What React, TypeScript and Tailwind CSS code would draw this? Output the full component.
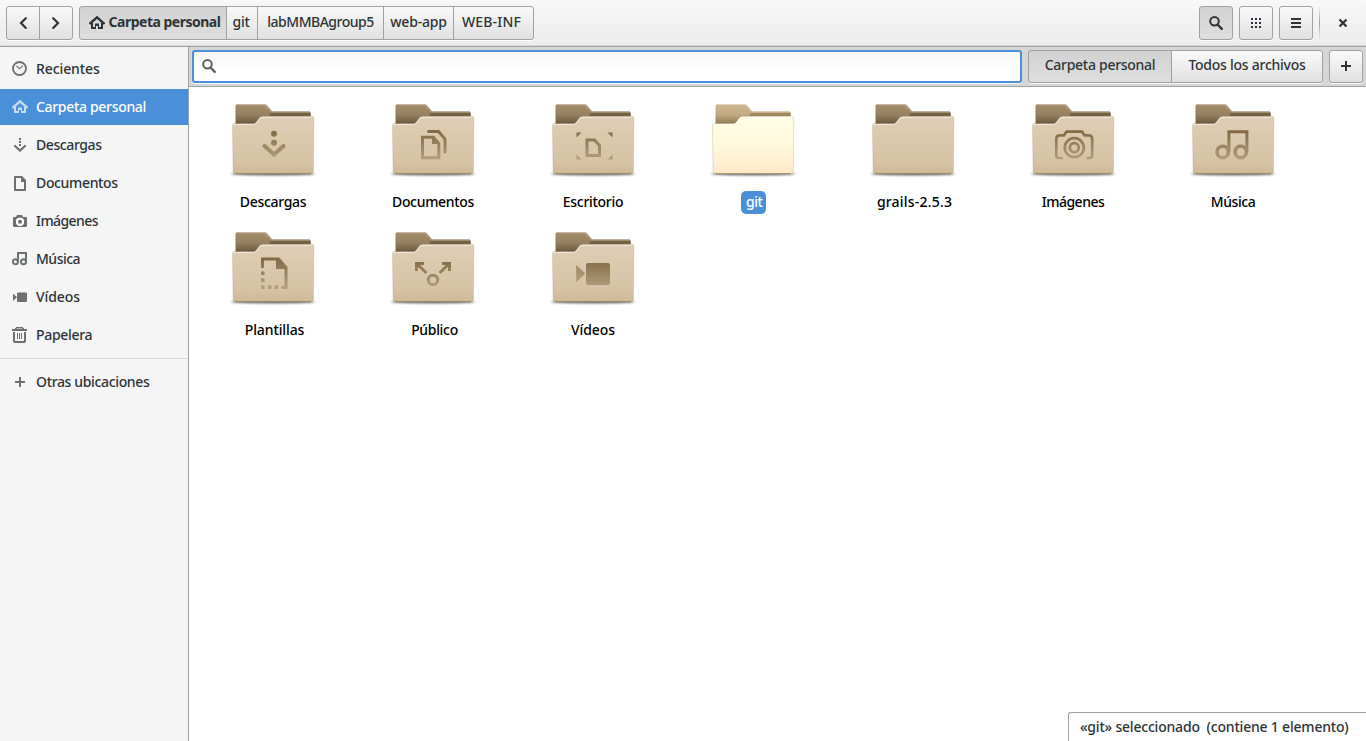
import type { ReactNode } from "react";

function Icon({ children, size = 16 }: { children: ReactNode; size?: number }) {
  return (
    <svg width={size} height={size} viewBox="0 0 16 16" fill="currentColor" className="block shrink-0">
      {children}
    </svg>
  );
}

const HomeIcon = () => (
  <Icon>
    <path d="M1.200 8.300 8 2.300l6.800 6" fill="none" stroke="currentColor" strokeWidth="2.400" strokeLinecap="round" strokeLinejoin="miter" />
    <path d="M2 8h2v4h2V8.500h4V12h2V8h2v5.300q0 .7-.7.700H9v-3H7v3H2.700Q2 14 2 13.300z" />
  </Icon>
);
const SearchIcon = () => (
  <Icon>
    <circle cx="6.500" cy="6.300" r="4.300" fill="none" stroke="currentColor" strokeWidth="2" />
    <path d="m9.500 9.500 4.300 4.300" stroke="currentColor" strokeWidth="2.400" strokeLinecap="round" />
  </Icon>
);
const PlusIcon = () => (
  <Icon>
    <path d="M3 7h4V3h2v4h4v2H9v4H7V9H3z" />
  </Icon>
);
const ClockIcon = () => (
  <Icon>
    <circle cx="7.500" cy="7.500" r="6.500" fill="none" stroke="currentColor" strokeWidth="1.900" />
    <path d="m4.500 5 3 2.700L11 4.700" fill="none" stroke="currentColor" strokeWidth="1.100" />
  </Icon>
);
const DownloadIcon = () => (
  <Icon>
    <path d="M7 1h2v2H7zM7 4h2v2H7zM7 7h2v2H7z" />
    <path d="m3 9 5 4.500L13 9" fill="none" stroke="currentColor" strokeWidth="2.300" strokeLinecap="round" />
  </Icon>
);
const DocIcon = () => (
  <Icon>
    <path fillRule="evenodd" d="M3 1h7l4 4v10a1 1 0 0 1-1 1H3a1 1 0 0 1-1-1V2a1 1 0 0 1 1-1zm1 2v11h8V7H9V3z" />
  </Icon>
);
const CameraIcon = () => (
  <Icon>
    <path fillRule="evenodd" d="M5 2h5l1 2h3a1 1 0 0 1 1 1v8a1 1 0 0 1-1 1H2a1 1 0 0 1-1-1V5a1 1 0 0 1 1-1h2zM8 4.800a4 4 0 1 0 0 8 4 4 0 0 0 0-8z" />
    <circle cx="8" cy="8.800" r="2" />
    <circle cx="8" cy="8.800" r="3.300" fill="none" stroke="#fff" strokeWidth="1.600" />
  </Icon>
);
const MusicIcon = () => (
  <Icon>
    <circle cx="3.400" cy="10.700" r="2.500" fill="none" stroke="currentColor" strokeWidth="2" />
    <circle cx="11.500" cy="10.700" r="2.500" fill="none" stroke="currentColor" strokeWidth="2" />
    <path d="M5 1h10v10h-2V3H7v8H5z" />
  </Icon>
);
const VideoIcon = () => (
  <Icon>
    <rect x="5" y="3.500" width="10" height="9.500" rx="1" />
    <path d="M1 4.500v7.500l4-3.800z" />
  </Icon>
);
const TrashIcon = () => (
  <Icon>
    <path d="M0 2h15v2H0zM4 0h7v1h1v1h-1.500V1.500h-6V2H3V1h1z" />
    <path d="M2 5v9.200q0 .8.800.8h9.400q.8 0 .8-.8V5" fill="none" stroke="currentColor" strokeWidth="2" />
    <path d="M5 6h1v6H5zM7 6h1v6H7zM9 6h1v6H9z" />
  </Icon>
);

const places = [
  { name: "Recientes", icon: <ClockIcon />, tracking: "tracking-[-0.1px]" },
  { name: "Carpeta personal", icon: <HomeIcon />, active: true, tracking: "tracking-[-0.32px]" },
  { name: "Descargas", icon: <DownloadIcon />, tracking: "tracking-[-0.4px]" },
  { name: "Documentos", icon: <DocIcon />, tracking: "tracking-[-0.35px]" },
  { name: "Imágenes", icon: <CameraIcon />, tracking: "tracking-[-0.58px]" },
  { name: "Música", icon: <MusicIcon />, tracking: "tracking-[-0.5px]" },
  { name: "Vídeos", icon: <VideoIcon />, tracking: "tracking-[-0.1px]" },
  { name: "Papelera", icon: <TrashIcon />, tracking: "tracking-[-0.32px]" },
];

const line = { fill: "none", stroke: "url(#ink)", strokeWidth: 3 };

const emblems: Record<string, ReactNode> = {
  Descargas: (
    <>
      <circle cx="49" cy="35.700" r="3" fill="url(#ink)" />
      <circle cx="49" cy="44.700" r="3" fill="url(#ink)" />
      <path d="M39.500 48 49 56.500 58.500 48" {...line} strokeWidth={4} strokeLinecap="round" />
    </>
  ),
  Documentos: (
    <>
      <path d="M37.500 39.200h10.800l5.500 6.300v14.300H37.500z" {...line} />
      <path d="M47 38.500V46h7.500z" fill="url(#ink)" />
      <path d="M43.500 33.500h10l6.500 7.500v13" {...line} strokeLinecap="round" />
    </>
  ),
  Escritorio: (
    <>
      <path d="M31.500 34.500h5l-5 5zM62.500 34.500h5v5zM31.500 56.500v5h5zM67.500 56.500v5h-5z" fill="url(#ink)" />
      <path d="M42 42h7.500l5 5.500v10H42z" {...line} />
    </>
  ),
  Imágenes: (
    <>
      <path d="M38 60H34q-2.700 0-2.700-3V41q0-3.700 3.700-3.700h4l2.500-3.600h15.500l2.500 3.600h4q3.700 0 3.700 3.700v16q0 3-2.700 3h-3" {...line} strokeWidth={2.7} />
      <circle cx="49.300" cy="49.700" r="9.500" {...line} strokeWidth={2.7} />
      <circle cx="49.300" cy="49.700" r="4.500" {...line} strokeWidth={2.8} />
    </>
  ),
  Música: (
    <>
      <circle cx="37.700" cy="54" r="5.700" {...line} strokeWidth={3.6} />
      <circle cx="55.700" cy="54" r="5.700" {...line} strokeWidth={3.6} />
      <path d="M43.900 54V33.700h18V54" {...line} />
    </>
  ),
  Plantillas: (
    <>
      <path d="M37.500 42v-9h16l7.500 8.500v20h-4.500" {...line} />
      <path d="M51 32v11h11z" fill="url(#ink)" />
      <path d="M36 45.500h3.500V49H36zM36 52.500h3.500V56H36zM36 59.500h3.500V63H36zM43 59.500h3.500V63H43zM49.500 59.500H53V63h-3.500z" fill="url(#ink)" />
    </>
  ),
  Público: (
    <>
      <circle cx="48" cy="54" r="4.700" {...line} />
      <path d="M31.500 45v-7.500H39M32 38l9.500 9M57 37.500h7.500V45M64 38l-9.500 9" {...line} />
    </>
  ),
  Vídeos: (
    <>
      <rect x="41" y="37" width="24" height="22" rx="2" fill="url(#ink)" />
      <path d="M31.200 39v17.300l9.100-8.700z" fill="url(#ink)" opacity=".8" />
    </>
  ),
};

function FolderDefs() {
  return (
    <svg width="0" height="0" className="absolute">
      <defs>
        <linearGradient id="ink" gradientUnits="userSpaceOnUse" x1="0" y1="33" x2="0" y2="63">
          <stop offset="0" stopColor="#826a44" />
          <stop offset="1" stopColor="#b5a080" />
        </linearGradient>
        <linearGradient id="front" x1="0" y1="0" x2="0" y2="1">
          <stop offset="0" stopColor="#dfceb6" />
          <stop offset=".8" stopColor="#d6c3a5" />
          <stop offset="1" stopColor="#cdb897" />
        </linearGradient>
        <linearGradient id="frontLit" x1="0" y1="0" x2="0" y2="1">
          <stop offset="0" stopColor="#fffee6" />
          <stop offset=".5" stopColor="#fff8dc" />
          <stop offset="1" stopColor="#ffe8c8" />
        </linearGradient>
        <linearGradient id="back" x1="0" y1="0" x2="0" y2="1">
          <stop offset="0" stopColor="#a28c6a" />
          <stop offset=".5" stopColor="#958060" />
          <stop offset="1" stopColor="#655438" />
        </linearGradient>
        <linearGradient id="backLit" x1="0" y1="0" x2="0" y2="1">
          <stop offset="0" stopColor="#cdb58c" />
          <stop offset=".5" stopColor="#c2a981" />
          <stop offset="1" stopColor="#897351" />
        </linearGradient>
        <filter id="soft" x="-10%" y="-100%" width="120%" height="300%">
          <feGaussianBlur stdDeviation="1.500 .8" />
        </filter>
      </defs>
    </svg>
  );
}

function Folder({ name, lit }: { name: string; lit?: boolean }) {
  return (
    <svg width="96" height="84" viewBox="0 0 96 84" className="block">
      <ellipse cx="48" cy="75.800" rx="42.500" ry="1.700" fill="#000" opacity=".6" filter="url(#soft)" />
      <path
        d="M10.500 27V8q0-1.700 1.700-1.700h27.500q1.300 0 2 .8l4.600 5.400q.7.800 1.800.8H84q1.700 0 1.700 1.700V27z"
        fill={lit ? "url(#backLit)" : "url(#back)"}
      />
      <path d="M46 15h39.700v3H44z" fill={lit ? "#8d7550" : "#5f4e33"} opacity=".65" />
      <path d="M12 6.800h28l5.300 6.400q.7.600 1.600.6H84" fill="none" stroke="#fff" strokeOpacity=".25" />
      <path
        d="M7.500 27.500q0-2 2-2h18.700q2 0 3-1.500l3-4q1.300-1.800 3.300-1.800h49.300q2 0 2 2L88.400 72.500q-.2 3.500-3 3.500H11Q8.200 76 8.100 72.500z"
        fill={lit ? "url(#frontLit)" : "url(#front)"}
        stroke="#8f7a58"
        strokeOpacity=".4"
        strokeWidth=".6"
      />
      <path d="M8.500 26.500h20q2 0 3.200-1.700l3-4q1-1.500 2.800-1.500h49.800" fill="none" stroke="#fff" strokeOpacity=".5" />
      <path d="M10 75.500h76" stroke="#8d7856" strokeOpacity=".7" />
      {emblems[name]}
    </svg>
  );
}

const folders = [
  { name: "Descargas", style: "tracking-[-0.32px]" },
  { name: "Documentos", style: "tracking-[-0.32px]" },
  { name: "Escritorio", style: "tracking-[-0.3px]" },
  { name: "git", style: "ml-px w-[25px] bg-[#4a90d9] text-white tracking-[-0.5px]" },
  { name: "grails-2.5.3", style: "ml-[3px] tracking-[0.2px]" },
  { name: "Imágenes", style: "tracking-[-0.52px]" },
  { name: "Música", style: "tracking-[-0.45px]" },
  { name: "Plantillas", style: "ml-[3px] tracking-[-0.1px]" },
  { name: "Público", style: "ml-[3px] tracking-[-0.32px]" },
  { name: "Vídeos", style: "tracking-[-0.1px]" },
];

const raised = "border border-[#a1a1a1] bg-linear-to-b from-[#fafafa] to-[#e0e0e0] shadow-[0_1px_0_#ffffffcc]";
const pressed = "border border-[#a1a1a1] bg-linear-to-b from-[#d2d2d2] to-[#dedede] shadow-[0_1px_0_#ffffffcc]";
const center = "flex items-center justify-center whitespace-nowrap";

export default function App() {
  return (
    <div className="relative flex h-[741px] w-[1366px] flex-col overflow-hidden bg-white font-['Noto_Sans','Open_Sans',sans-serif] text-[14px] leading-5 font-medium text-[#2e3436]">
      <FolderDefs />
      <header className="flex h-[47px] shrink-0 items-start border-b border-[#a1a1a1] bg-linear-to-b from-[#f8f8f8] to-[#ececec] px-1.5 pt-1.5 shadow-[inset_0_-1px_0_#d9d9d9]">
        <div className="flex h-[34px]">
          <button className={`${raised} ${center} w-[34px] rounded-l-[3px]`}>
            <Icon><path d="M10.800 3.200 6 8l4.800 4.900" fill="none" stroke="currentColor" strokeWidth="2.200" strokeLinecap="round" /></Icon>
          </button>
          <button className={`${raised} ${center} -ml-px w-[34px] rounded-r-[3px]`}>
            <Icon><path d="M5.200 3.200 10 8l-4.800 4.900" fill="none" stroke="currentColor" strokeWidth="2.200" strokeLinecap="round" /></Icon>
          </button>
        </div>
        <nav className="ml-1.5 flex h-[34px]">
          <button className={`${pressed} ${center} w-[148px] gap-1 rounded-l-[3px] pb-0.5 pl-[3px] font-bold tracking-[-0.5px]`}>
            <span className="pt-0.5"><HomeIcon /></span>
            <span>Carpeta personal</span>
          </button>
          <button className={`${raised} ${center} -ml-px w-8 pr-0.5 pb-0.5 tracking-[-0.3px]`}>git</button>
          <button className={`${raised} ${center} -ml-px w-[127px] pb-0.5 tracking-[-0.5px]`}>labMMBAgroup5</button>
          <button className={`${raised} ${center} -ml-px w-[71px] pb-0.5 tracking-[-0.2px]`}>web-app</button>
          <button className={`${raised} ${center} -ml-px w-[81px] rounded-r-[3px] pr-1 pb-0.5 tracking-[0.2px]`}>WEB-INF</button>
        </nav>
        <div className="ml-auto flex h-[34px] items-stretch gap-1.5">
          <button className={`${pressed} ${center} w-[34px] rounded-[3px]`}><SearchIcon /></button>
          <button className={`${raised} ${center} w-[34px] rounded-[3px]`}>
            <Icon>
              {[3, 7, 11].map((y) => [3, 7, 11].map((x) => <rect key={`${x}-${y}`} x={x} y={y} width="2" height="2" />))}
            </Icon>
          </button>
          <button className={`${raised} ${center} w-[34px] rounded-[3px]`}>
            <Icon><path d="M3 3h10v2H3zM3 7h10v2H3zM3 11h10v2H3z" /></Icon>
          </button>
          <div className="w-px bg-linear-to-b from-transparent via-[#a1a1a1] to-transparent" />
          <button className={`${center} w-[34px]`}>
            <Icon><path d="m4.500 4.500 7 7M11.500 4.500l-7 7" stroke="currentColor" strokeWidth="2.200" /></Icon>
          </button>
        </div>
      </header>

      <div className="flex min-h-0 flex-1">
        <aside className="w-[189px] shrink-0 border-r border-[#a1a1a1] bg-[#f5f5f5] pt-1">
          <ul className="flex flex-col gap-0.5">
            {places.map((p) => (
              <li key={p.name} className={`flex h-9 items-center gap-2 pl-3 ${p.active ? "bg-[#4a90d9] text-white" : ""}`}>
                <span className={p.active ? "text-[#c5dcf3]" : "text-[#6c7071]"}>{p.icon}</span>
                <span className={p.tracking}>{p.name}</span>
              </li>
            ))}
          </ul>
          <div className="mt-[5px] h-px bg-[#d9d9d9]" />
          <div className="mt-[5px] flex h-9 items-center gap-2 pl-3">
            <span className="text-[#6c7071]"><PlusIcon /></span>
            <span className="tracking-[-0.35px]">Otras ubicaciones</span>
          </div>
        </aside>

        <main className="flex min-w-0 flex-1 flex-col">
          <div className="flex h-10 shrink-0 items-start border-b border-[#a1a1a1] bg-[#d6d6d6] pt-[3px] pr-[3px] pl-[3px]">
            <label className="flex h-[33px] w-[830px] items-center rounded-[3px] border-2 border-[#4a90d9] bg-linear-to-b from-[#f5f5f5] to-white to-60% pb-px pl-[7px] text-[#5c6162] shadow-[0_1px_0_#ffffffcc]">
              <SearchIcon />
            </label>
            <div className="ml-1.5 flex h-[33px]">
              <button className={`${pressed} ${center} w-36 rounded-l-[3px] pb-[3px] tracking-[-0.28px]`}>Carpeta personal</button>
              <button className={`${raised} ${center} -ml-px w-[152px] rounded-r-[3px] pb-[3px] tracking-[-0.25px]`}>Todos los archivos</button>
            </div>
            <button className={`${raised} ${center} ml-1.5 h-[33px] w-[34px] rounded-[3px] pb-px`}><PlusIcon /></button>
          </div>

          <ul className="grid grid-cols-[repeat(7,160px)] pt-[11px] pl-1 text-black">
            {folders.map((f) => (
              <li key={f.name} className="flex h-32 flex-col items-center">
                <Folder name={f.name} lit={f.name === "git"} />
                <span className={`mt-[9px] h-[23px] rounded-[5px] px-[5px] leading-[22px] ${f.style}`}>{f.name}</span>
              </li>
            ))}
          </ul>
        </main>
      </div>

      <div className="absolute right-0 bottom-0 flex h-[29px] w-[298px] items-center rounded-tl-[3px] border-t border-l border-[#a1a1a1] bg-white pl-[11px] tracking-[-0.2px] whitespace-pre">
        «git» seleccionado  (contiene 1 elemento)
      </div>
    </div>
  );
}
